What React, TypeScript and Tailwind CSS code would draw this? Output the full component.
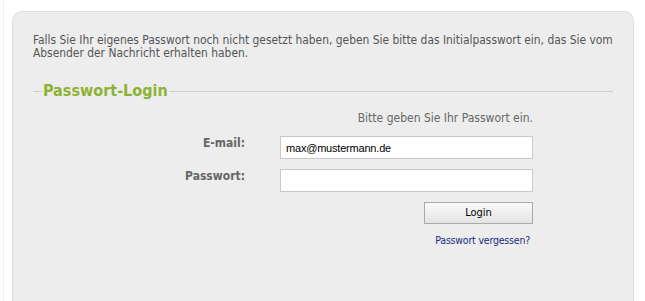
import React from "react"

export default function App() {
  return (
    <div className="min-h-screen bg-white pl-3 pr-[11px] pt-[11px] font-['DejaVu_Sans_Condensed','DejaVu_Sans',sans-serif] font-stretch-condensed">
      <div className="absolute left-[3px] top-0 h-full w-px bg-[#f0f0f0]" />
      <div className="h-[300px] rounded-t-[10px] border border-b-0 border-[#dddddd] bg-[#ededed] px-[20px] pt-[22px]">
        <p className="text-[11.9px] leading-[13px] text-[#555555]">
          Falls Sie Ihr eigenes Passwort noch nicht gesetzt haben, geben Sie bitte das Initialpasswort ein, das Sie vom Absender der Nachricht erhalten haben.
        </p>

        <fieldset className="mt-[21px] border-t border-[#cccccc] pl-[9px]">
          <legend className="px-px text-[16px] font-bold leading-[20px] text-[#8db334]">Passwort-Login</legend>
        </fieldset>

        <div className="-mt-px w-[500px]">
          <p className="mt-[12px] text-right text-[12px] leading-[13px] text-[#666666]">Bitte geben Sie Ihr Passwort ein.</p>

          <div className="mt-[11px] flex items-start">
            <label className="w-[212px] pt-[1px] text-right text-[12px] font-bold leading-[13px] text-[#666666]">E-mail:</label>
            <input
              defaultValue="max@mustermann.de"
              className="ml-[35px] h-[23px] w-[253px] border border-[#c8c8c8] bg-white px-[5px] font-['Liberation_Sans',Arial,sans-serif] text-[11px] tracking-[-0.2px] text-black outline-none"
            />
          </div>

          <div className="mt-[10px] flex items-start">
            <label className="w-[212px] pt-[1px] text-right text-[12px] font-bold leading-[13px] text-[#666666]">Passwort:</label>
            <input
              type="password"
              className="ml-[35px] h-[23px] w-[253px] border border-[#c8c8c8] bg-white px-[5px] text-[12px] outline-none"
            />
          </div>

          <div className="mt-[10px] flex justify-end">
            <button className="h-[22px] w-[109px] border border-[#a9a9a9] bg-gradient-to-b from-[#fbfbfb] to-[#e3e3e3] text-[11px] text-black">
              Login
            </button>
          </div>

          <div className="mt-[10px] flex justify-end pr-[3px]">
            <a href="#" className="text-[10.5px] leading-[13px] tracking-[-0.2px] text-[#1c2a80]">Passwort vergessen?</a>
          </div>
        </div>
      </div>
    </div>
  )
}
